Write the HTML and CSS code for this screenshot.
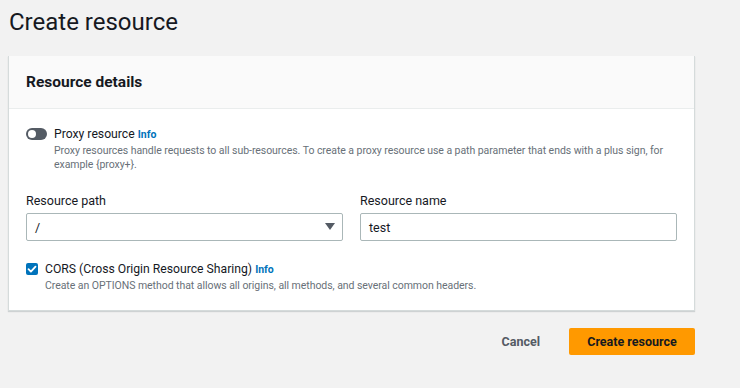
FILE: index.html
```html
<!DOCTYPE html>
<html>
<head>
<meta charset="utf-8">
<link rel="stylesheet" href="styles.css">
</head>
<body>
<div class="page">
  <h1 class="title">Create resource</h1>
  <div class="card">
    <div class="card-header">Resource details</div>
    <div class="card-body">
      <div class="toggle-row">
        <span class="toggle"><span class="knob"></span></span>
        <div class="toggle-text">
          <div class="opt-label">Proxy resource <a class="info">Info</a></div>
          <div class="desc">Proxy resources handle requests to all sub-resources. To create a proxy resource use a path parameter that ends with a plus sign, for example {proxy+}.</div>
        </div>
      </div>
      <div class="fields">
        <div class="field">
          <div class="label">Resource path</div>
          <div class="control select"><span>/</span><svg class="caret" width="10" height="8" viewBox="0 0 10 8"><path d="M0 0h10L5 7z" fill="#545b64"/></svg></div>
        </div>
        <div class="field">
          <div class="label">Resource name</div>
          <div class="control">test</div>
        </div>
      </div>
      <div class="check-row">
        <span class="checkbox"><svg width="12" height="12" viewBox="0 0 12 12"><path d="M2.5 6.2l2.4 2.4 4.6-5" fill="none" stroke="#fff" stroke-width="1.8" stroke-linecap="round" stroke-linejoin="round"/></svg></span>
        <div class="toggle-text">
          <div class="opt-label">CORS (Cross Origin Resource Sharing) <a class="info">Info</a></div>
          <div class="desc">Create an OPTIONS method that allows all origins, all methods, and several common headers.</div>
        </div>
      </div>
    </div>
  </div>
  <div class="actions">
    <button class="btn-link">Cancel</button>
    <button class="btn-primary">Create resource</button>
  </div>
</div>
</body>
</html>
```
FILE: styles.css
```css
* { box-sizing: border-box; }
html, body { margin: 0; background: #f2f2f2; }
body {
  font-family: Roboto, "Open Sans", sans-serif;
  color: #16191f;
  width: 740px;
  height: 388px;
  overflow: hidden;
}
.page { padding: 0 45px 0 8px; }
.title {
  margin: 0;
  padding: 5px 0 0 1px;
  font-size: 24px;
  font-weight: 400;
  line-height: 35px;
  height: 56px;
}
.card {
  background: #fff;
  border-left: 1px solid #d5dbdb;
  border-right: 1px solid #d5dbdb;
  border-bottom: 1px solid #d5dbdb;
  box-shadow: 0 1px 1px rgba(0,28,36,0.15);
}
.card-header {
  background: #fafafa;
  border-bottom: 1px solid #eaeded;
  height: 53px;
  padding: 0 17px;
  display: flex;
  align-items: center;
  font-weight: 700;
  font-size: 15.5px;
}
.card-body { padding: 16px 17px 17px 17px; }
.toggle-row, .check-row { display: flex; align-items: flex-start; }
.toggle {
  width: 21px; height: 12px;
  border-radius: 6px;
  background: #545b64;
  margin-top: 3px;
  margin-right: 7px;
  position: relative;
  flex: none;
}
.knob {
  position: absolute; left: 2px; top: 2px;
  width: 8px; height: 8px; border-radius: 50%;
  background: #fff;
}
.opt-label { font-size: 12.2px; line-height: 18px; }
.info { color: #0073bb; font-weight: 700; font-size: 10.5px; }
.desc {
  color: #687078;
  font-size: 10.5px;
  line-height: 14px;
  letter-spacing: -0.05px;
}
.fields {
  display: grid;
  grid-template-columns: 1fr 1fr;
  column-gap: 17px;
  margin-top: 20px;
}
.label { font-size: 12.5px; line-height: 17px; margin-bottom: 4px; }
.control {
  height: 28px;
  border: 1px solid #aab7b8;
  border-radius: 2px;
  background: #fff;
  padding: 0 8px;
  display: flex;
  align-items: center;
  font-size: 12.5px;
}
.select { justify-content: space-between; padding-right: 7px; }
.check-row { margin-top: 19px; }
.checkbox {
  width: 12px; height: 12px;
  border-radius: 2px;
  background: #0073bb;
  margin-top: 3px;
  margin-right: 7px;
  flex: none;
  display: flex;
}
.actions {
  display: flex;
  justify-content: flex-end;
  align-items: center;
  gap: 29px;
  margin-top: 17px;
}
.btn-link {
  border: none; background: none;
  font-family: inherit;
  font-weight: 700;
  font-size: 12.5px;
  color: #545b64;
  padding: 0;
}
.btn-primary {
  border: none;
  background: #ff9900;
  border-radius: 2px;
  font-family: inherit;
  font-weight: 700;
  font-size: 12.5px;
  color: #16191f;
  width: 126px;
  height: 27px;
  padding: 0;
}
```
